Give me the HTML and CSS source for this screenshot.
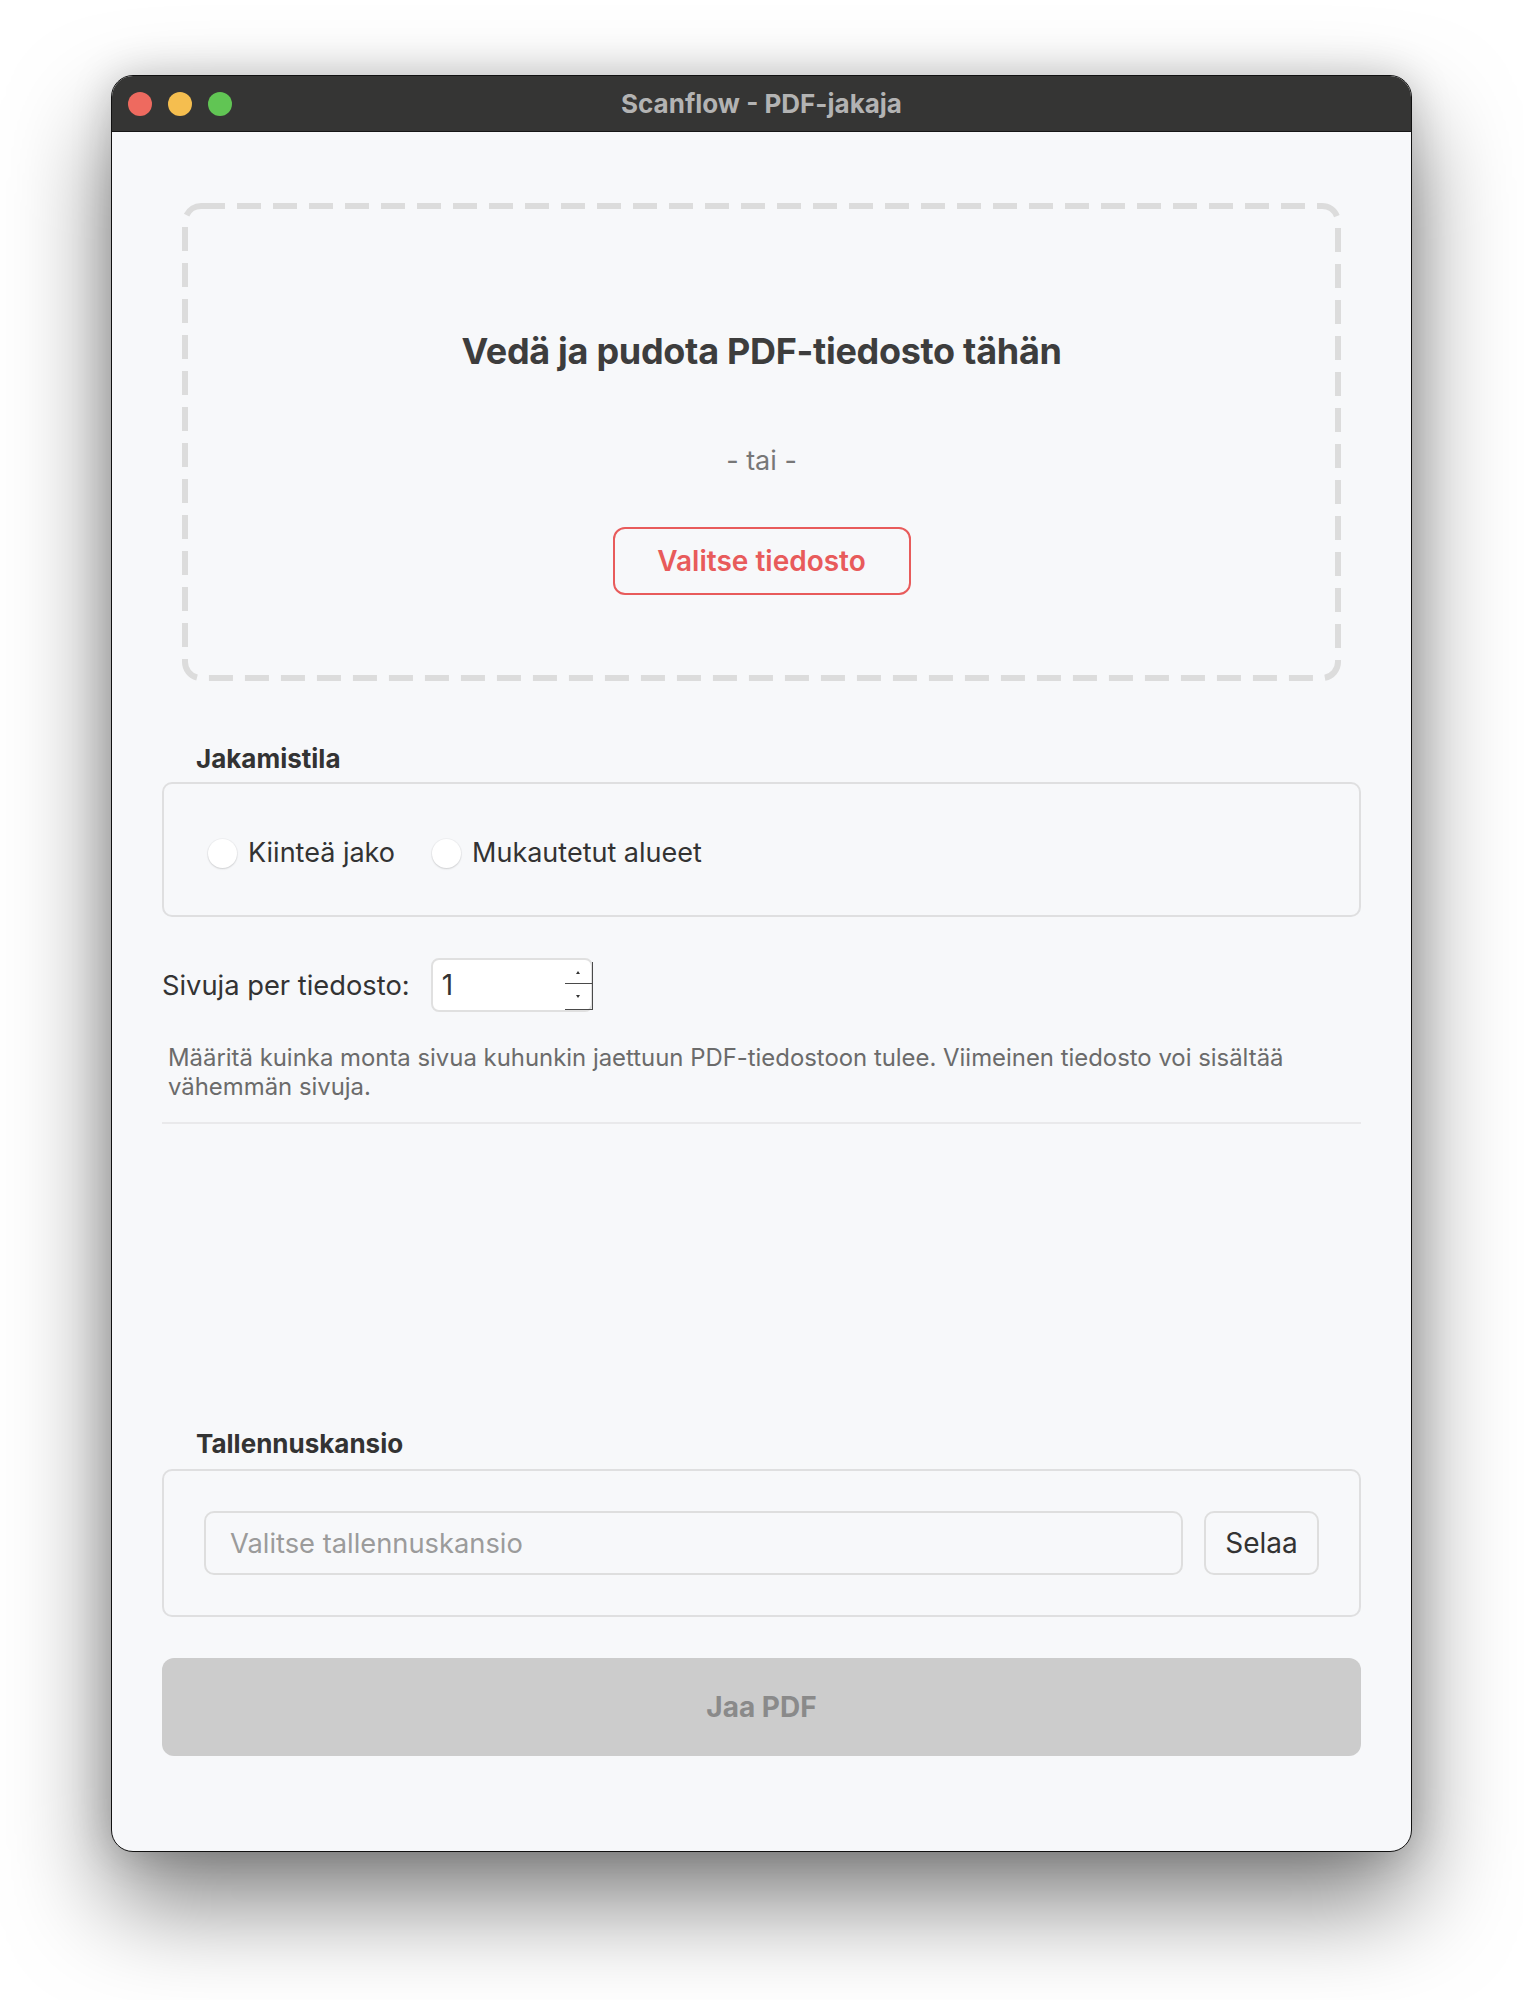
FILE: index.html
```html
<!DOCTYPE html>
<html lang="fi">
<head>
<meta charset="utf-8">
<title>Scanflow - PDF-jakaja</title>
<link rel="stylesheet" href="styles.css">
</head>
<body>
<div class="stage">
  <div class="window">
    <div class="titlebar">
      <div class="lights">
        <span class="light red"></span>
        <span class="light yellow"></span>
        <span class="light green"></span>
      </div>
      <div class="title">Scanflow - PDF-jakaja</div>
      <div></div>
    </div>
    <div class="content">
      <div class="dropzone">
        <svg class="dash" width="1159" height="478" viewBox="0 0 1159 478" aria-hidden="true">
          <rect x="3" y="3" width="1153" height="472" rx="16" ry="16" fill="none" stroke="#dcdcdc" stroke-width="6" stroke-dasharray="24 12"/>
        </svg>
        <h1 class="drop-title">Vedä ja pudota PDF-tiedosto tähän</h1>
        <p class="or">- tai -</p>
        <button class="pick">Valitse tiedosto</button>
      </div>

      <div class="group-label">Jakamistila</div>
      <div class="group mode">
        <label class="radio"><span class="circle"></span>Kiinteä jako</label>
        <label class="radio"><span class="circle"></span>Mukautetut alueet</label>
      </div>

      <div class="spinrow">
        <span class="spinlabel">Sivuja per tiedosto:</span>
        <div class="spin">
          <span class="val">1</span>
          <div class="arrows">
            <span class="arrow up"><i></i></span>
            <span class="arrow down"><i></i></span>
          </div>
        </div>
      </div>
      <p class="desc">Määritä kuinka monta sivua kuhunkin jaettuun PDF-tiedostoon tulee. Viimeinen tiedosto voi sisältää<br>vähemmän sivuja.</p>
      <div class="sep"></div>

      <div class="group-label label-folder">Tallennuskansio</div>
      <div class="group folder">
        <div class="input">Valitse tallennuskansio</div>
        <button class="browse">Selaa</button>
      </div>

      <button class="go">Jaa PDF</button>
    </div>
  </div>
</div>
</body>
</html>
```
FILE: styles.css
```css
* { box-sizing: border-box; }
html, body { margin: 0; padding: 0; background: #ffffff; }
body {
  width: 1524px;
  height: 2000px;
  overflow: hidden;
  font-family: Inter, "Noto Sans", "Liberation Sans", sans-serif;
  color: #333333;
}
.stage { padding: 75px 0 0 111px; }
.window {
  width: 1301px;
  height: 1777px;
  border: 1px solid #111111;
  border-radius: 22px;
  overflow: hidden;
  background: #f7f8fa;
  box-shadow: 0 50px 100px rgba(0,0,0,0.5), 0 0 40px rgba(0,0,0,0.18);
  display: flex;
  flex-direction: column;
}
.titlebar {
  height: 56px;
  flex: none;
  background: #353534;
  border-bottom: 1px solid #161616;
  display: grid;
  grid-template-columns: 1fr auto 1fr;
  align-items: center;
}
.lights { display: flex; gap: 16px; padding-left: 16px; }
.light { width: 24px; height: 24px; border-radius: 50%; display: block; }
.red { background: #ee6a5f; }
.yellow { background: #f5be4f; }
.green { background: #61c554; }
.title { font-size: 26px; font-weight: 700; color: #b3b3b3; }

.content { flex: 1; padding: 71px 50px 0; display: flex; flex-direction: column; }

.dropzone {
  position: relative;
  height: 478px;
  margin: 0 20px;
  display: flex;
  flex-direction: column;
  align-items: center;
  padding-top: 126px;
}
.dash { position: absolute; left: 0; top: 0; }
.drop-title { margin: 0; font-size: 36px; line-height: 44px; font-weight: 700; color: #3d3d3d; letter-spacing: -0.3px; }
.or { margin: 72px 0 0; font-size: 27px; line-height: 32px; color: #777777; }
.pick {
  margin-top: 50px;
  width: 298px;
  height: 68px;
  padding: 0;
  border: 2px solid #e85b5b;
  border-radius: 12px;
  background: transparent;
  color: #e85b5b;
  font-family: inherit;
  font-size: 28px;
  font-weight: 600;
}

.group-label { margin: 62px 0 0 34px; font-size: 26px; line-height: 32px; font-weight: 700; color: #333333; }
.group { border: 2px solid #dfdfe0; border-radius: 10px; }
.mode {
  margin-top: 7px;
  height: 135px;
  display: flex;
  align-items: center;
  gap: 37px;
  padding: 7px 44px 0;
}
.radio { display: flex; align-items: center; gap: 11px; font-size: 27px; line-height: 34px; color: #333333; }
.circle {
  width: 29px;
  height: 29px;
  border-radius: 50%;
  background: #ffffff;
  box-shadow: 0 1px 2px rgba(0,0,0,0.14), 0 0 0 1px rgba(0,0,0,0.03);
  display: block;
}

.spinrow { margin-top: 41px; height: 54px; display: flex; align-items: center; gap: 21px; }
.spinlabel { font-size: 27.3px; color: #333333; }
.spin {
  width: 162px;
  height: 54px;
  background: #ffffff;
  border: 2px solid #e0e0e0;
  border-radius: 8px;
  display: flex;
  align-items: center;
  justify-content: space-between;
  padding-left: 9px;
}
.val { font-size: 28px; color: #333333; }
.arrows {
  width: 28px;
  margin-right: -2px;
  align-self: stretch;
  display: flex;
  flex-direction: column;
  padding-top: 2px;
}
.arrow {
  display: flex;
  align-items: center;
  justify-content: center;
  border-right: 1px solid #4a4a4a;
  border-bottom: 1px solid #4a4a4a;
}
.up { height: 22px; }
.down { height: 26px; }
.arrow i { display: block; width: 0; height: 0; border-left: 2px solid transparent; border-right: 2px solid transparent; }
.up i { border-bottom: 3px solid #333333; }
.down i { border-top: 3px solid #333333; }

.desc { margin: 31px 0 0 6px; font-size: 23.9px; line-height: 29px; color: #6b6b6b; }
.sep { margin-top: 21px; height: 2px; background: #e9e9eb; }

.label-folder { margin-top: 304px; }
.folder {
  margin-top: 9px;
  height: 148px;
  padding: 40px;
  display: flex;
  gap: 21px;
}
.input {
  flex: 1;
  height: 64px;
  border: 2px solid #dedede;
  border-radius: 10px;
  padding-left: 24px;
  display: flex;
  align-items: center;
  font-size: 27.3px;
  color: #9b9b9b;
}
.browse {
  width: 115px;
  height: 64px;
  padding: 0;
  border: 2px solid #dedede;
  border-radius: 10px;
  background: transparent;
  font-family: inherit;
  font-size: 28px;
  color: #333333;
}
.go {
  margin-top: 41px;
  width: 100%;
  height: 98px;
  padding: 0;
  border: 0;
  border-radius: 12px;
  background: #cccccc;
  color: #8a8a8a;
  font-family: inherit;
  font-size: 28px;
  font-weight: 700;
}
```
